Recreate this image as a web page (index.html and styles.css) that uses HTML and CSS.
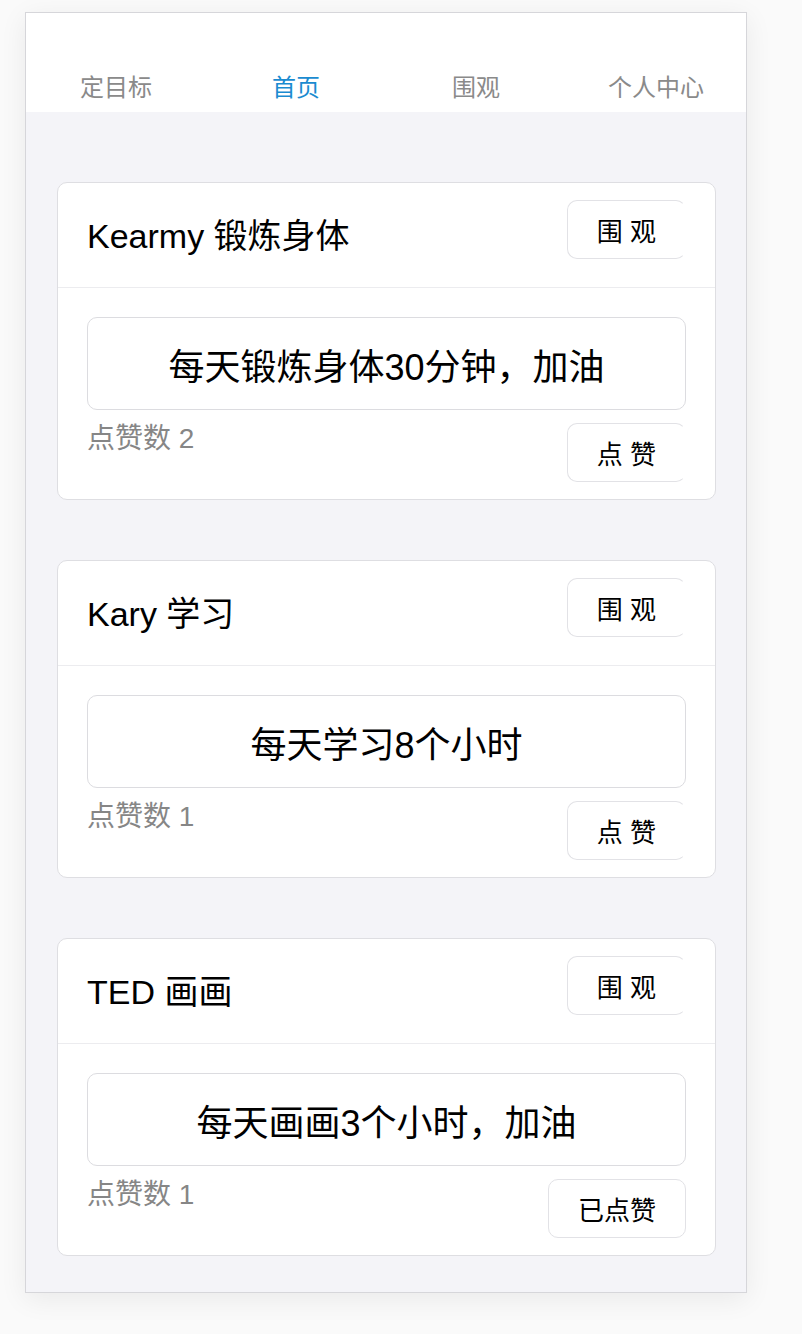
FILE: index.html
```html
<!DOCTYPE html>
<html lang="zh-CN">
<head>
<meta charset="utf-8">
<title>首页</title>
<link rel="stylesheet" href="styles.css">
</head>
<body>
<div class="frame">
  <nav class="tabs">
    <div class="tab">定目标</div>
    <div class="tab active">首页</div>
    <div class="tab">围观</div>
    <div class="tab">个人中心</div>
  </nav>
  <main class="content">
    <section class="card">
      <div class="card-head">
        <div class="card-title">Kearmy 锻炼身体</div>
        <button class="btn clip">围 观</button>
      </div>
      <div class="card-body">
        <div class="goal">每天锻炼身体30分钟，加油</div>
        <div class="like-row">
          <div class="likes">点赞数 2</div>
          <button class="btn clip">点 赞</button>
        </div>
      </div>
    </section>
    <section class="card">
      <div class="card-head">
        <div class="card-title">Kary 学习</div>
        <button class="btn clip">围 观</button>
      </div>
      <div class="card-body">
        <div class="goal">每天学习8个小时</div>
        <div class="like-row">
          <div class="likes">点赞数 1</div>
          <button class="btn clip">点 赞</button>
        </div>
      </div>
    </section>
    <section class="card">
      <div class="card-head">
        <div class="card-title">TED 画画</div>
        <button class="btn clip">围 观</button>
      </div>
      <div class="card-body">
        <div class="goal">每天画画3个小时，加油</div>
        <div class="like-row">
          <div class="likes">点赞数 1</div>
          <button class="btn">已点赞</button>
        </div>
      </div>
    </section>
  </main>
</div>
</body>
</html>
```

FILE: styles.css
```css
* {
  box-sizing: border-box;
}

html, body {
  margin: 0;
  padding: 0;
}

body {
  background: #fafafa;
  font-family: "Liberation Sans", "Noto Sans CJK SC", sans-serif;
  color: #000;
  height: 1334px;
  overflow: hidden;
}

.frame {
  margin: 12px 0 0 25px;
  width: 722px;
  height: 1281px;
  border: 1px solid #d6d6da;
  background: #f4f4f8;
  box-shadow: 0 6px 26px rgba(0, 0, 0, 0.07);
  display: flex;
  flex-direction: column;
}

.tabs {
  height: 99px;
  background: #fff;
  display: grid;
  grid-template-columns: repeat(4, 1fr);
  align-items: end;
  padding-bottom: 12px;
}

.tab {
  text-align: center;
  font-size: 24px;
  line-height: 24px;
  color: #8a8a8a;
}

.tab.active {
  color: #1b8bd0;
}

.content {
  padding: 70px 30px 0 31px;
  display: flex;
  flex-direction: column;
  gap: 60px;
}

.card {
  background: #fff;
  border: 1px solid #dedee2;
  border-radius: 10px;
  padding: 0 29px;
}

.card-head {
  height: 105px;
  border-bottom: 1px solid #ececef;
  margin: 0 -29px;
  padding: 0 29px;
  display: flex;
  justify-content: space-between;
  align-items: center;
}

.card-title {
  font-size: 34px;
  line-height: 40px;
  margin-top: 2px;
}

.card-head .btn {
  align-self: flex-start;
  margin-top: 17px;
}

.btn {
  height: 59px;
  padding: 0 29px;
  border: 1px solid #e2e2e6;
  border-radius: 10px;
  background: #fff;
  font-family: "Liberation Sans", "Noto Sans CJK SC", sans-serif;
  font-size: 26px;
  color: #000;
  white-space: pre;
}

.btn.clip {
  border-right-color: transparent;
}

.card-body {
  padding: 29px 0 17px;
}

.goal {
  height: 93px;
  border: 1px solid #dcdce0;
  border-radius: 10px;
  display: flex;
  align-items: center;
  justify-content: center;
  font-size: 36px;
  color: #000;
}

.like-row {
  margin-top: 13px;
  display: flex;
  justify-content: space-between;
  align-items: flex-start;
}

.likes {
  font-size: 28px;
  line-height: 28px;
  margin-top: 2px;
  color: #868686;
}
```
